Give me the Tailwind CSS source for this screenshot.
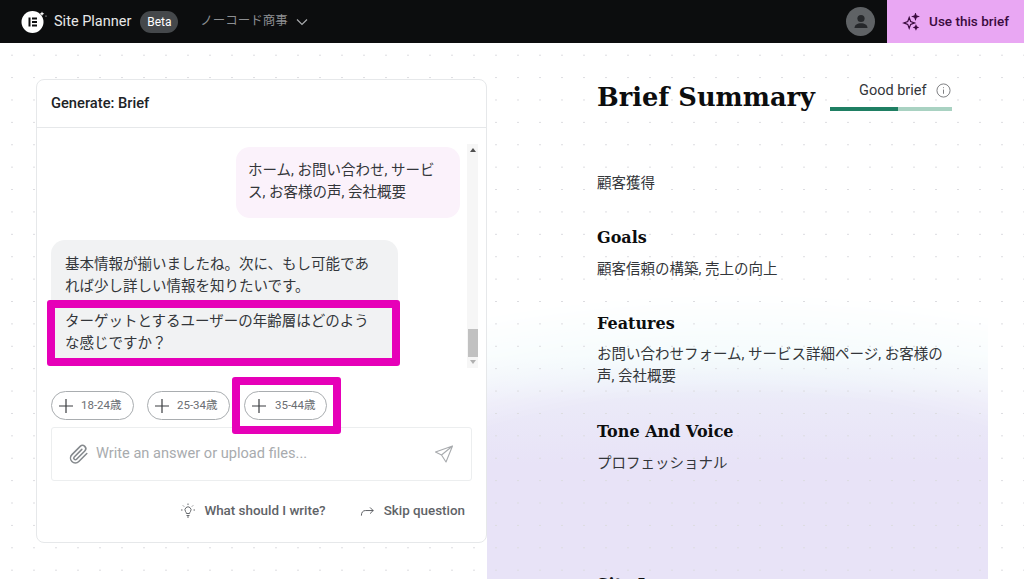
<!DOCTYPE html>
<html lang="ja">
<head>
<meta charset="utf-8">
<script src="https://cdn.jsdelivr.net/npm/@tailwindcss/browser@4"></script>
</head>
<body class="w-[1024px] h-[579px] overflow-hidden bg-white font-['Roboto','Noto_Sans_CJK_JP',sans-serif] text-[#1f2124]">
<header class="h-[43px] bg-[#0c0d0e] flex items-center relative z-20">
  <div class="ml-[21px] w-[26px] h-[22px] relative shrink-0">
    <svg viewBox="0 0 26 22" class="w-[26px] h-[22px]">
      <circle cx="11.500" cy="11" r="11" fill="#fff"/>
      <rect x="7.500" y="6.500" width="2" height="9" fill="#0c0d0e"/>
      <rect x="11" y="6.500" width="5" height="2" fill="#0c0d0e"/>
      <rect x="11" y="10" width="5" height="2" fill="#0c0d0e"/>
      <rect x="11" y="13.500" width="5" height="2" fill="#0c0d0e"/>
      <path d="M21 .5l.7 1.600 1.600.7-1.600.7-.7 1.600-.7-1.600-1.600-.7 1.600-.7z" fill="#fff"/>
      <circle cx="25" cy="5" r=".6" fill="#fff"/>
    </svg>
  </div>
  <span class="ml-[7px] text-[14.500px] text-[#e8e8e8]">Site Planner</span>
  <span class="ml-[9px] w-[38px] h-[22px] rounded-full bg-[#45484b] text-white text-[12px] flex items-center justify-center">Beta</span>
  <span class="ml-[22px] text-[12.500px] text-[#8d8f92] flex items-center gap-[8px]">ノーコード商事
    <svg viewBox="0 0 12 8" class="w-[12px] h-[8px]" fill="none" stroke="#a8aaad" stroke-width="1.200"><path d="M1 1.500l5 5 5-5"/></svg>
  </span>
  <div class="ml-auto mr-[12px] w-[29px] h-[29px] rounded-full bg-[#5f6265] flex items-center justify-center">
    <svg viewBox="0 0 20 20" class="w-[20px] h-[20px]" fill="#26282b"><circle cx="10" cy="6.500" r="3.600"/><path d="M3.500 16c0-3.200 3-4.800 6.500-4.800s6.500 1.600 6.500 4.800z"/></svg>
  </div>
  <div class="w-[137px] h-full bg-[#e9a7f3] flex items-center justify-center gap-[9px] text-[#3b0b3f] text-[13.500px] font-medium">
    <svg viewBox="0 0 20 20" class="w-[18px] h-[18px]" fill="none" stroke="#3b0b3f" stroke-width="1.300"><path d="M8 5l1.600 4.400L14 11l-4.400 1.600L8 17l-1.600-4.400L2 11l4.400-1.600z"/><path d="M15 1l.8 2.200L18 4l-2.200.8L15 7l-.8-2.200L12 4l2.200-.8z" fill="#3b0b3f"/><path d="M15.500 14l.6 1.400 1.400.6-1.400.6-.6 1.400-.6-1.400-1.400-.6 1.400-.6z" fill="#3b0b3f"/></svg>
    Use this brief
  </div>
</header>

<main class="relative h-[536px] flex overflow-hidden bg-white">
  <!-- soft gradient panel behind the summary -->
  <div class="absolute left-[487px] top-[250px] w-[501px] h-[286px] bg-[linear-gradient(180deg,#effafb_0%,#eff9fb_22%,#ebeaf8_38%,#e8e3f7_60%,#e8e3f7_100%)] [mask-image:radial-gradient(ellipse_130%_100%_at_50%_100%,#000_65%,transparent_100%)]"></div>
  <!-- dotted canvas -->
  <div class="absolute inset-0 bg-[radial-gradient(circle,#dcdce0_0.8px,transparent_1px)] bg-[size:22px_22.4px] bg-[position:1px_1px]"></div>

  <section class="relative mt-[36px] ml-[36px] w-[451px] h-[464px] bg-white rounded-[8px] border border-[#e6e8ea] flex flex-col shrink-0">
    <h2 class="h-[48px] border-b border-[#e6e8ea] px-[14px] flex items-center text-[14.700px] font-medium text-[#202326]">Generate: Brief</h2>
    <div class="relative h-[244px] shrink-0 pt-[19px]">
      <div class="ml-[199px] w-[224px] h-[71px] rounded-[14px] bg-[#fbf2fb] pl-[12px] pt-[13px] text-[14.500px] leading-[22px] text-[#33363a] whitespace-nowrap">ホーム, お問い合わせ, サービ<br>ス, お客様の声, 会社概要</div>
      <div class="mt-[22px] ml-[14px] w-[347px] h-[124px] rounded-[14px] bg-[#f1f2f3] pl-[14px] pt-[14px] text-[14.500px] leading-[22px] text-[#33363a] whitespace-nowrap">
        <p>基本情報が揃いましたね。次に、もし可能であ<br>れば少し詳しい情報を知りたいです。</p>
        <p class="mt-[13px]">ターゲットとするユーザーの年齢層はどのよう<br>な感じですか？</p>
      </div>
      <!-- scrollbar -->
      <div class="absolute right-[8px] top-[16px] bottom-[4px] w-[11px] bg-[#f6f6f6] flex flex-col items-center justify-between">
        <div class="mt-[4px] w-0 h-0 border-x-[3px] border-x-transparent border-b-[4px] border-b-[#505050]"></div>
        <div class="mt-auto mb-[3px] w-[10px] h-[28px] bg-[#c1c1c1]"></div>
        <div class="mb-[4px] w-0 h-0 border-x-[3px] border-x-transparent border-t-[4px] border-t-[#b0b0b0]"></div>
      </div>
    </div>
    <div class="mt-[19px] ml-[14px] flex gap-[13px]">
      <span class="w-[83px] h-[29px] rounded-full border border-[#a9adb0] flex items-center pl-[7px] gap-[8px] text-[11.500px] text-[#6a6e72]"><svg viewBox="0 0 14 14" class="w-[14px] h-[14px]" stroke="#3a3d40" stroke-width="1.200"><path d="M7 0v14M0 7h14"/></svg>18-24歳</span>
      <span class="w-[83px] h-[29px] rounded-full border border-[#a9adb0] flex items-center pl-[7px] gap-[8px] text-[11.500px] text-[#6a6e72]"><svg viewBox="0 0 14 14" class="w-[14px] h-[14px]" stroke="#3a3d40" stroke-width="1.200"><path d="M7 0v14M0 7h14"/></svg>25-34歳</span>
      <span class="ml-px w-[83px] h-[29px] rounded-full border border-[#a9adb0] flex items-center pl-[7px] gap-[9px] text-[11.500px] text-[#6a6e72]"><svg viewBox="0 0 14 14" class="w-[14px] h-[14px]" stroke="#3a3d40" stroke-width="1.200"><path d="M7 0v14M0 7h14"/></svg>35-44歳</span>
    </div>
    <div class="mt-[7px] ml-[14px] w-[421px] h-[54px] rounded-[3px] border border-[#eceeef] flex items-center pl-[16px] pr-[17px]">
      <svg viewBox="0 0 24 24" class="w-[22px] h-[22px] shrink-0" fill="none" stroke="#85898d" stroke-width="1.700" stroke-linecap="round"><path d="M20.500 11.500l-8.700 8.700a5.300 5.300 0 0 1-7.500-7.500l9-9a3.500 3.500 0 0 1 5 5l-9 9a1.700 1.700 0 0 1-2.500-2.500l8.300-8.300"/></svg>
      <span class="ml-[6px] text-[14.600px] text-[#a8abae]">Write an answer or upload files...</span>
      <svg viewBox="0 0 20 20" class="ml-auto w-[20px] h-[20px]" fill="none" stroke="#a8abae" stroke-width="1.100" stroke-linejoin="round"><path d="M18.500 2L1.500 8l6 3 4.500 7zM7.500 11L18.500 2"/></svg>
    </div>
    <div class="mt-[20px] mr-[21px] flex justify-end items-center text-[13.400px] font-medium text-[#5f6367]">
      <svg viewBox="0 0 16 16" class="w-[16px] h-[16px] mr-[8px]" fill="none" stroke="#55585c" stroke-width=".9"><path d="M5.500 8.500a3 3 0 1 1 5 0c-.6.700-.9 1.300-.9 2H6.400c0-.7-.3-1.300-.9-2zM6.500 12.500h3M7 14h2M1 7h1.500M13.500 7H15M3 2.500l1 1M13 2.500l-1 1M8 .5V2"/></svg>
      What should I write?
      <svg viewBox="0 0 16 12" class="ml-[34px] mr-[9px] w-[15px] h-[12px]" fill="none" stroke="#55585c" stroke-width="1" stroke-linecap="round"><path d="M1.500 10.500C1.500 7.500 3 5.500 6 5.500h8M11 2.500l3 3-3 3"/></svg>
      Skip question
    </div>
  </section>

  <section class="relative ml-[110px] w-[360px] pt-[34px]">
    <div class="flex items-start">
      <h1 class="w-[218px] shrink-0 font-['DejaVu_Serif',serif] font-bold text-[25.700px] leading-[40px] text-[#0c0d0e] whitespace-nowrap">Brief Summary</h1>
      <div class="ml-[15px] w-[122px] shrink-0">
        <div class="mt-[2px] h-[23px] flex items-center pl-[29px] text-[14.500px] text-[#33363a] gap-[9px]">Good brief
          <svg viewBox="0 0 16 16" class="w-[15px] h-[15px]" fill="none" stroke="#77797c" stroke-width="1"><circle cx="8" cy="8" r="7"/><path d="M8 7v4.500M8 4.500v1"/></svg>
        </div>
        <div class="mt-[5px] h-[4px] bg-[#a9d2c2]"><div class="h-full w-[68px] bg-[#1f7f63]"></div></div>
      </div>
    </div>
    <p class="mt-[56px] text-[14.500px] leading-[22px] text-[#33363a]">顧客獲得</p>
    <h3 class="mt-[31px] font-['DejaVu_Serif',serif] font-bold text-[16px] leading-[24px] text-[#0c0d0e]">Goals</h3>
    <p class="mt-[9px] text-[14.500px] leading-[22px] text-[#33363a]">顧客信頼の構築, 売上の向上</p>
    <h3 class="mt-[31px] font-['DejaVu_Serif',serif] font-bold text-[16px] leading-[24px] text-[#0c0d0e]">Features</h3>
    <p class="mt-[8px] text-[14.500px] leading-[22px] text-[#33363a]">お問い合わせフォーム, サービス詳細ページ, お客様の声, 会社概要</p>
    <h3 class="mt-[32px] font-['DejaVu_Serif',serif] font-bold text-[16px] leading-[24px] text-[#0c0d0e]">Tone And Voice</h3>
    <p class="mt-[9px] text-[14.500px] leading-[22px] text-[#33363a]">プロフェッショナル</p>
    <h3 class="mt-[98px] font-['DejaVu_Serif',serif] font-bold text-[16px] leading-[24px] text-[#0c0d0e]">Site Language</h3>
  </section>

  <!-- annotation highlights -->
  <div class="absolute left-[47px] top-[257px] w-[353px] h-[66px] border-[8px] border-[#e600b8] rounded-[3px]"></div>
  <div class="absolute left-[232px] top-[334px] w-[109px] h-[57px] border-[8px] border-[#e600b8] rounded-[3px]"></div>
</main>
</body>
</html>
